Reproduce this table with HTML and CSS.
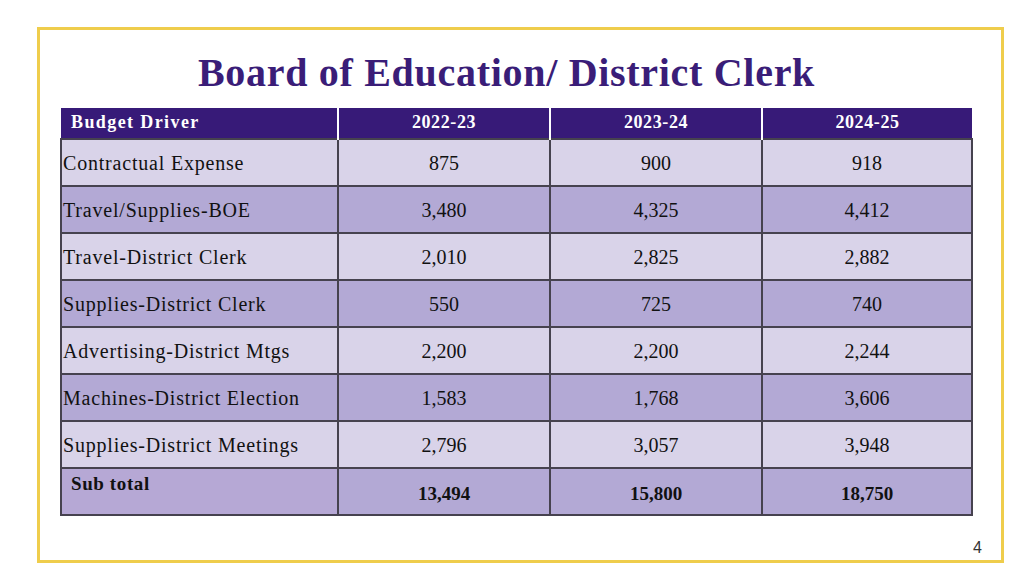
FILE: index.html
```html
<!DOCTYPE html>
<html>
<head>
<meta charset="utf-8">
<link rel="stylesheet" href="styles.css">
</head>
<body>
<div class="slide">
  <h1 class="title">Board of Education/ District Clerk</h1>
  <table class="budget">
    <thead>
      <tr>
        <th class="label">Budget Driver</th>
        <th>2022-23</th>
        <th>2023-24</th>
        <th>2024-25</th>
      </tr>
    </thead>
    <tbody>
      <tr class="light"><td class="label">Contractual Expense</td><td>875</td><td>900</td><td>918</td></tr>
      <tr class="dark"><td class="label">Travel/Supplies-BOE</td><td>3,480</td><td>4,325</td><td>4,412</td></tr>
      <tr class="light"><td class="label">Travel-District Clerk</td><td>2,010</td><td>2,825</td><td>2,882</td></tr>
      <tr class="dark"><td class="label">Supplies-District Clerk</td><td>550</td><td>725</td><td>740</td></tr>
      <tr class="light"><td class="label">Advertising-District Mtgs</td><td>2,200</td><td>2,200</td><td>2,244</td></tr>
      <tr class="dark"><td class="label">Machines-District Election</td><td>1,583</td><td>1,768</td><td>3,606</td></tr>
      <tr class="light"><td class="label">Supplies-District Meetings</td><td>2,796</td><td>3,057</td><td>3,948</td></tr>
      <tr class="dark total"><td class="label">Sub total</td><td>13,494</td><td>15,800</td><td>18,750</td></tr>
    </tbody>
  </table>
  <div class="page-num">4</div>
</div>
</body>
</html>
```

FILE: styles.css
```css
html, body {
  margin: 0;
  padding: 0;
  background: #ffffff;
}
body {
  width: 1024px;
  height: 576px;
  overflow: hidden;
}
.slide {
  box-sizing: border-box;
  margin: 27px 0 0 37px;
  width: 967px;
  height: 536px;
  border: 3px solid #efcd4c;
  padding: 18px 0 0 20px;
  display: flex;
  flex-direction: column;
  position: relative;
}
.title {
  margin: 0 0 10px 0;
  width: 913px;
  text-align: center;
  font-family: "Liberation Serif", serif;
  font-weight: bold;
  font-size: 40px;
  letter-spacing: 0.7px;
  line-height: 50px;
  color: #3a1d78;
  padding-right: 20px;
  box-sizing: border-box;
}
.budget {
  border-collapse: collapse;
  width: 913px;
  font-family: "Liberation Serif", serif;
  color: #111111;
  table-layout: fixed;
}
.budget th {
  background: #371a78;
  color: #ffffff;
  font-weight: bold;
  font-size: 18px;
  letter-spacing: 0.6px;
  height: 31px;
  padding: 0 0 1px 0;
  text-align: center;
  border-left: 2px solid #ffffff;
  box-sizing: border-box;
}
.budget th:first-child { width: 277px; border-left: none; }
.budget th:nth-child(2) { width: 212px; }
.budget th:nth-child(3) { width: 212px; }
.budget th.label {
  text-align: left;
  padding-left: 10px;
  letter-spacing: 1.4px;
}
.budget td {
  height: 47px;
  padding: 2px 0 0 0;
  text-align: center;
  font-size: 20px;
  border: 2px solid #46424f;
  box-sizing: border-box;
}
.budget td.label {
  text-align: left;
  padding-left: 1px;
  letter-spacing: 0.8px;
}
.light td { background: #d9d3e9; }
.dark td { background: #b3a9d5; }
.total td {
  font-weight: bold;
  font-size: 19px;
  padding: 5px 0 0 0;
}
.total td.label {
  background: #b6a8d5;
  vertical-align: top;
  padding: 4px 0 0 9px;
  letter-spacing: 0.6px;
}
.page-num {
  position: absolute;
  right: 19px;
  bottom: 3px;
  font-family: "Liberation Sans", sans-serif;
  font-size: 16px;
  color: #333333;
}
```
